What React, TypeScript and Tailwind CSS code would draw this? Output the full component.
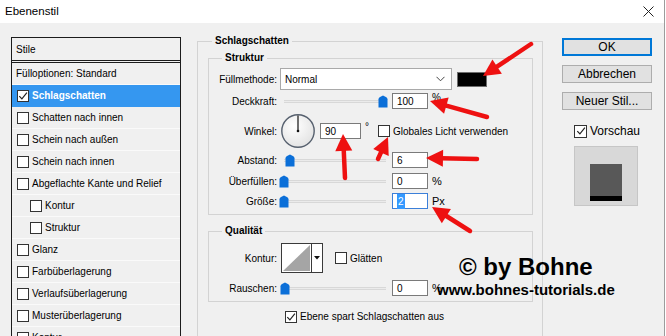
import React from 'react';

const Check = ({ checked = false, big = false }: { checked?: boolean; big?: boolean }) => (
  <span
    className={`flex shrink-0 items-center justify-center border border-[#333333] bg-white ${
      big ? 'h-[13px] w-[13px]' : 'h-[12px] w-[12px]'
    }`}
  >
    {checked && (
      <svg width="10" height="10" viewBox="0 0 10 10">
        <path d="M1.3 5.1 L3.9 7.9 L8.9 1.7" fill="none" stroke="#222" strokeWidth="1.2" />
      </svg>
    )}
  </span>
);

const Slider = ({ pos }: { pos: number }) => (
  <div className="relative h-[16px] w-[104px] shrink-0">
    <div className="absolute left-[2px] right-0 top-[7px] h-[3px] border-y border-[#d8d8d8] bg-[#ebebeb]" />
    <svg className="absolute top-[2px]" style={{ left: pos - 5 }} width="10" height="13" viewBox="0 0 10 13">
      <path d="M0.5 4.2 Q0.5 3 1.6 2.2 L5 0.4 L8.4 2.2 Q9.5 3 9.5 4.2 V12.6 H0.5 Z" fill="#0b6fd8" />
    </svg>
  </div>
);

const Field = ({ value, className = 'w-[36px]', active = false }: { value: string; className?: string; active?: boolean }) => (
  <div
    className={`flex h-[16px] shrink-0 items-center bg-white pl-[4px] text-[10px] ${className} border ${
      active ? 'border-[#3b7fd9]' : 'border-[#7a7a7a]'
    }`}
  >
    {active ? <span className="bg-[#3399ff] px-[1px] text-white">{value}</span> : value}
  </div>
);

const Label = ({ children }: { children: React.ReactNode }) => (
  <div className="w-[68px] shrink-0 text-right">{children}</div>
);

const Arrow = ({ x1, y1, x2, y2 }: { x1: number; y1: number; x2: number; y2: number }) => {
  const dx = x2 - x1;
  const dy = y2 - y1;
  const len = Math.hypot(dx, dy);
  const ux = dx / len;
  const uy = dy / len;
  const hl = 17;
  const hw = 8.5;
  const bx = x2 - ux * hl;
  const by = y2 - uy * hl;
  const px = -uy;
  const py = ux;
  const pts = `${x2},${y2} ${bx + px * hw},${by + py * hw} ${bx - px * hw},${by - py * hw}`;
  return (
    <g>
      <line x1={x1} y1={y1} x2={bx + ux * 2} y2={by + uy * 2} stroke="#ee1111" strokeWidth={4.5} strokeLinecap="round" />
      <polygon points={pts} fill="#ee1111" />
    </g>
  );
};

const styleList = [
  { label: 'Schlagschatten', checked: true, selected: true },
  { label: 'Schatten nach innen' },
  { label: 'Schein nach außen' },
  { label: 'Schein nach innen' },
  { label: 'Abgeflachte Kante und Relief' },
  { label: 'Kontur', indent: true },
  { label: 'Struktur', indent: true },
  { label: 'Glanz' },
  { label: 'Farbüberlagerung' },
  { label: 'Verlaufsüberlagerung' },
  { label: 'Musterüberlagerung' },
  { label: 'Kontur' },
];

export default function App() {
  return (
    <div className="relative h-[336px] w-[666px] overflow-hidden bg-white font-['Liberation_Sans',Arial,sans-serif] text-[10px] text-black">
      <div className="flex h-full w-[665px] flex-col border-r border-[#9c9c9c]">
        {/* title bar */}
        <div className="flex h-[23px] shrink-0 items-center justify-between bg-white pl-[5px] pr-[10px]">
          <span className="text-[11.5px]">Ebenenstil</span>
          <svg width="11" height="11" viewBox="0 0 11 11">
            <path d="M0.5 0.5 L10.5 10.5 M10.5 0.5 L0.5 10.5" stroke="#222" strokeWidth="1" />
          </svg>
        </div>

        <div className="flex flex-1 items-start bg-[#f0f0f0]">
          {/* styles list */}
          <div className="ml-[11px] mt-[14px] h-[320px] w-[170px] shrink-0 border border-[#1c1c1c]">
            <div className="flex h-[25px] items-center border-b-[3px] border-double border-[#1c1c1c] pl-[4px]">Stile</div>
            <div className="flex h-[22px] items-center border-b border-[#fafafa] pl-[4px]">Fülloptionen: Standard</div>
            {styleList.map((s, i) => (
              <div
                key={i}
                className={`flex h-[22px] items-center gap-[3px] border-b ${
                  s.selected ? 'border-[#3597f0] bg-[#3597f0] font-bold text-white' : 'border-[#fafafa]'
                } ${s.indent ? 'pl-[18px]' : 'pl-[5px]'}`}
              >
                <Check checked={s.checked} />
                <span>{s.label}</span>
              </div>
            ))}
          </div>

          {/* Schlagschatten */}
          <fieldset className="ml-[16px] mt-[12px] h-[330px] w-[346px] shrink-0 border border-[#d3d3d3] pl-[10px] pr-[9px]">
            <legend className="ml-[4px] px-[3px] font-bold leading-[12px]">Schlagschatten</legend>

            <fieldset className="mt-[5px] border border-[#d3d3d3] pb-[5px]">
              <legend className="ml-[13px] px-[3px] font-bold leading-[12px]">Struktur</legend>
              <div className="pt-[4px]">
                <div className="flex h-[22px] items-center">
                  <Label>Füllmethode:</Label>
                  <div className="ml-[3px] flex h-[22px] w-[172px] items-center justify-between border border-[#a9a9a9] bg-white pl-[4px] pr-[6px]">
                    <span>Normal</span>
                    <svg width="9" height="6" viewBox="0 0 9 6">
                      <path d="M0.5 0.8 L4.5 4.8 L8.5 0.8" fill="none" stroke="#444" strokeWidth="1" />
                    </svg>
                  </div>
                  <div className="ml-[5px] h-[15px] w-[30px] border border-[#6d6d6d] bg-black" />
                </div>

                <div className="mt-[3px] flex h-[16px] items-center">
                  <Label>Deckkraft:</Label>
                  <div className="ml-[5px]">
                    <Slider pos={101} />
                  </div>
                  <div className="ml-[6px]">
                    <Field value="100" />
                  </div>
                  <span className="ml-[4px] self-start leading-[10px]">%</span>
                </div>

                <div className="mt-[5px] flex h-[34px] items-center">
                  <Label>Winkel:</Label>
                  <svg className="ml-[4px] shrink-0" width="34" height="34" viewBox="0 0 34 34">
                    <defs>
                      <radialGradient id="dial" cx="40%" cy="35%" r="70%">
                        <stop offset="0" stopColor="#ffffff" />
                        <stop offset="1" stopColor="#e2e2e2" />
                      </radialGradient>
                    </defs>
                    <circle cx="17" cy="17" r="16.2" fill="url(#dial)" stroke="#56606e" strokeWidth="1.4" />
                    <line x1="17" y1="17" x2="17" y2="1.5" stroke="#111" strokeWidth="1.2" />
                    <circle cx="17" cy="17" r="1.3" fill="#111" />
                  </svg>
                  <div className="ml-[5px]">
                    <Field value="90" className="w-[41px]" />
                  </div>
                  <span className="ml-[4px] mb-[10px] w-[5px]">°</span>
                  <div className="ml-[8px]">
                    <Check />
                  </div>
                  <span className="ml-[3px]">Globales Licht verwenden</span>
                </div>

                <div className="mt-[4px] flex h-[16px] items-center">
                  <Label>Abstand:</Label>
                  <div className="ml-[5px]">
                    <Slider pos={8} />
                  </div>
                  <div className="ml-[6px]">
                    <Field value="6" />
                  </div>
                </div>

                <div className="mt-[5px] flex h-[16px] items-center">
                  <Label>Überfüllen:</Label>
                  <div className="ml-[5px]">
                    <Slider pos={2} />
                  </div>
                  <div className="ml-[6px]">
                    <Field value="0" />
                  </div>
                  <span className="ml-[4px] text-[11px]">%</span>
                </div>

                <div className="mt-[4px] flex h-[16px] items-center">
                  <Label>Größe:</Label>
                  <div className="ml-[5px]">
                    <Slider pos={2} />
                  </div>
                  <div className="ml-[6px]">
                    <Field value="2" active />
                  </div>
                  <span className="ml-[4px] text-[11px]">Px</span>
                </div>
              </div>
            </fieldset>

            <fieldset className="mt-[10px] border border-[#d3d3d3] pb-[5px]">
              <legend className="ml-[13px] px-[3px] font-bold leading-[12px]">Qualität</legend>
              <div className="pt-[6px]">
                <div className="flex h-[30px] items-center">
                  <Label>Kontur:</Label>
                  <div className="ml-[4px] flex h-[30px] w-[42px] border border-[#3a3a3a] bg-white">
                    <svg width="29" height="28" viewBox="0 0 29 28">
                      <polygon points="1,27 28,1 28,27" fill="#a5a5a5" />
                    </svg>
                    <div className="flex flex-1 items-center justify-center border-l border-[#3a3a3a]">
                      <svg width="6" height="4" viewBox="0 0 6 4">
                        <polygon points="0,0 6,0 3,3.5" fill="#111" />
                      </svg>
                    </div>
                  </div>
                  <div className="ml-[12px]">
                    <Check />
                  </div>
                  <span className="ml-[3px]">Glätten</span>
                </div>

                <div className="mt-[7px] flex h-[16px] items-center">
                  <Label>Rauschen:</Label>
                  <div className="ml-[5px]">
                    <Slider pos={3} />
                  </div>
                  <div className="ml-[6px]">
                    <Field value="0" />
                  </div>
                  <span className="ml-[4px] text-[11px]">%</span>
                </div>
              </div>
            </fieldset>

            <div className="ml-[77px] mt-[7px] flex items-center gap-[3px]">
              <Check checked />
              <span>Ebene spart Schlagschatten aus</span>
            </div>
          </fieldset>

          {/* buttons */}
          <div className="ml-[19px] mt-[15px] w-[90px] shrink-0 text-[12px]">
            <div className="flex h-[18px] items-center justify-center border-2 border-[#0078d7] bg-[#e1e1e1]">OK</div>
            <div className="mt-[9px] flex h-[18px] items-center justify-center border border-[#adadad] bg-[#e1e1e1]">Abbrechen</div>
            <div className="mt-[9px] flex h-[18px] items-center justify-center border border-[#adadad] bg-[#e1e1e1]">Neuer Stil...</div>
            <div className="ml-[12px] mt-[12px] flex items-center gap-[3px]">
              <Check checked big />
              <span>Vorschau</span>
            </div>
            <div className="ml-[12px] mt-[6px] h-[60px] w-[64px] border border-[#c6c6c6] bg-[#d8d8d8] pl-[15px] pt-[17px]">
              <div className="h-[37px] w-[32px] bg-black">
                <div className="h-[32px] w-[32px] bg-[#585858]" />
              </div>
            </div>
          </div>
        </div>
      </div>

      {/* watermark */}
      <span className="absolute left-[459px] top-[255px] text-[24px] font-bold leading-none">© by Bohne</span>
      <span className="absolute left-[437px] top-[282px] text-[15px] font-bold leading-none">www.bohnes-tutorials.de</span>

      {/* annotation arrows */}
      <svg className="pointer-events-none absolute left-0 top-0" width="666" height="336">
        <Arrow x1={531} y1={44} x2={483} y2={76} />
        <Arrow x1={487} y1={117} x2={430} y2={101} />
        <Arrow x1={345} y1={178} x2={343} y2={134} />
        <Arrow x1={378} y1={159} x2={388} y2={137} />
        <Arrow x1={477} y1={159} x2={426} y2={158} />
        <Arrow x1={470} y1={231} x2={432} y2={207} />
      </svg>
    </div>
  );
}
